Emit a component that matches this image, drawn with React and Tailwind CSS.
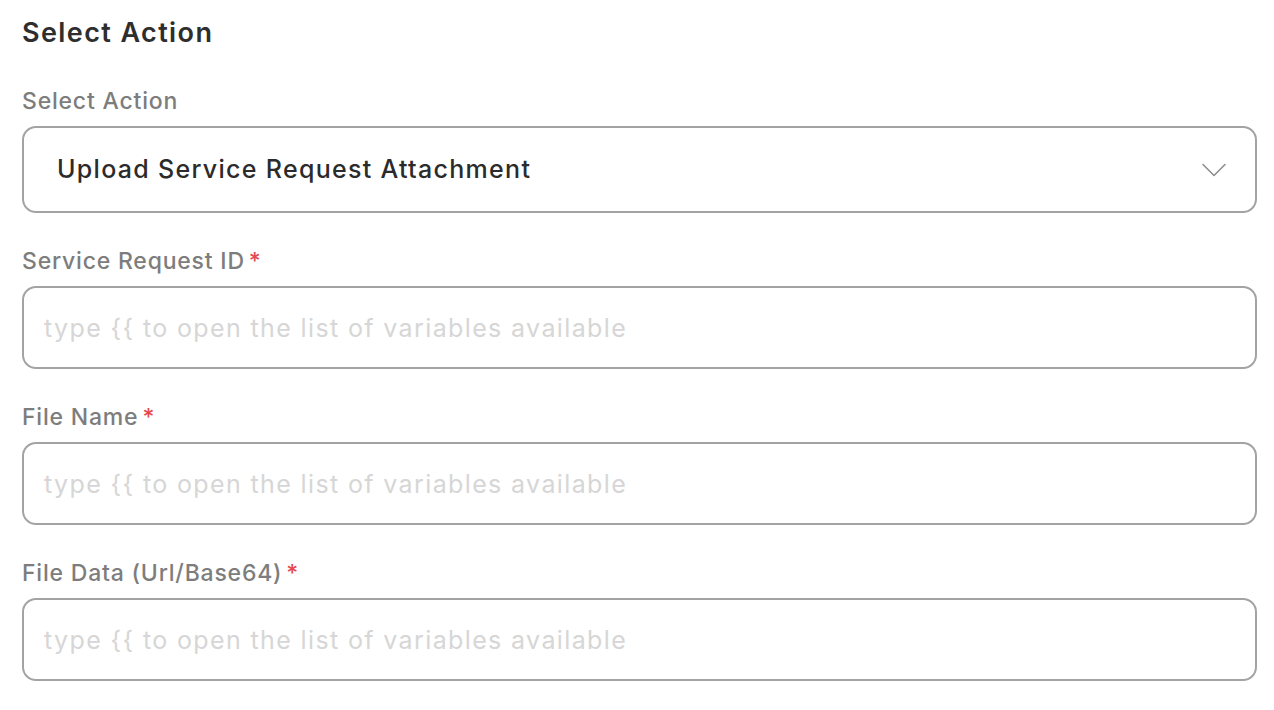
import { ChevronDown } from "lucide-react";

const fields = [
  { label: "Service Request ID" },
  { label: "File Name" },
  { label: "File Data (Url/Base64)" },
];

const font = { fontFamily: "Inter, 'Noto Sans', sans-serif" };

export default function App() {
  return (
    <div className="min-h-[710px] bg-white pl-[22px] pr-[17px] pt-[13px]" style={font}>
      <div className="flex flex-col gap-[33px]">
        <h2 className="text-[27px] leading-[40px] font-semibold tracking-[1.4px] text-[#2e2e2e]">
          Select Action
        </h2>

        <div>
          <div className="mb-[10px] text-[23px] leading-[30px] font-medium tracking-[0.8px] text-[#7d7d7d]">
            Select Action
          </div>
          <div className="flex h-[87px] items-center justify-between rounded-[14px] border-2 border-[#a3a3a3] pl-[33px] pr-[19px]">
            <span className="text-[25px] font-medium tracking-[1.3px] text-[#2b2b2b]">
              Upload Service Request Attachment
            </span>
            <ChevronDown size={44} strokeWidth={0.8} className="text-[#8a8a8a]" />
          </div>
        </div>

        {fields.map((f) => (
          <div key={f.label}>
            <div className="mb-[10px] flex items-start text-[23px] leading-[30px] font-medium tracking-[0.8px] text-[#7d7d7d]">
              {f.label}
              <span className="ml-[4px] text-[#e5484d]">*</span>
            </div>
            <input
              placeholder="type {{ to open the list of variables available"
              className="block h-[83px] w-full rounded-[14px] border-2 border-[#a3a3a3] px-[20px] text-[25px] tracking-[1.37px] text-[#2b2b2b] outline-none placeholder:text-[#d6d6d6]"
              style={font}
            />
          </div>
        ))}
      </div>
    </div>
  );
}
